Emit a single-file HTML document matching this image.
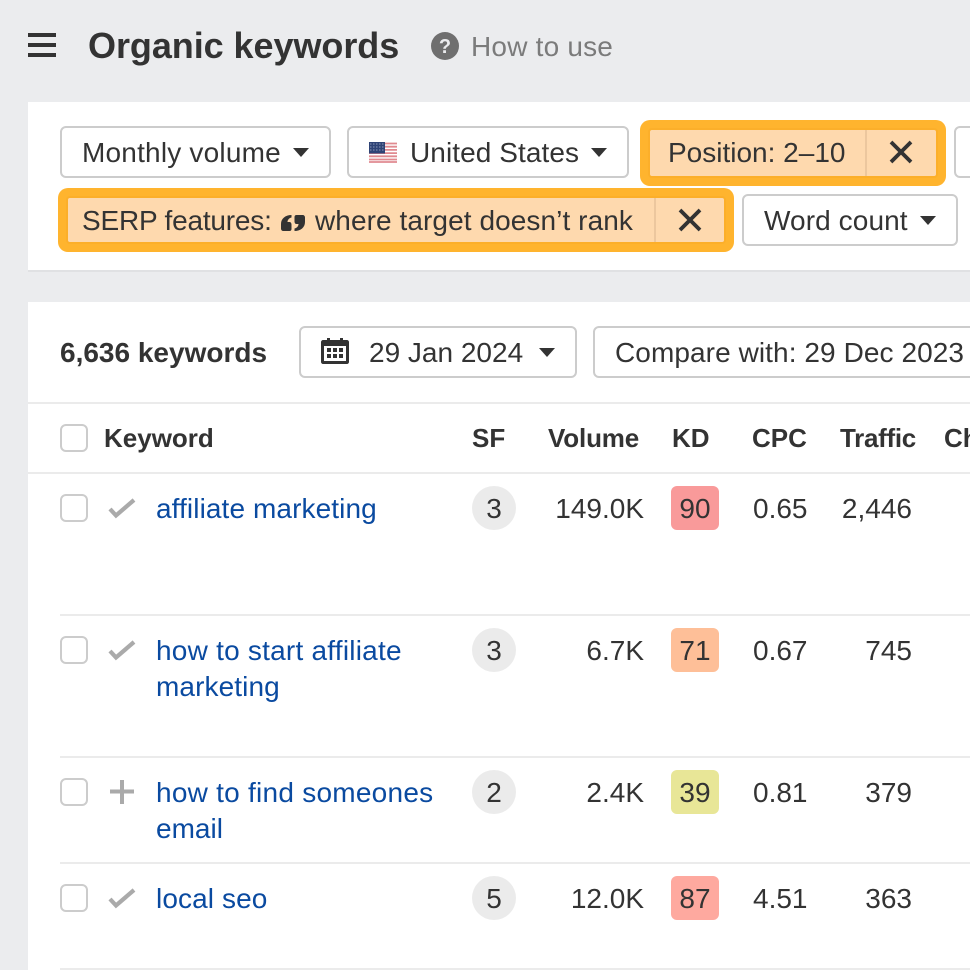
<!DOCTYPE html>
<html><head><meta charset="utf-8"><style>
html,body{margin:0;padding:0;width:970px;height:970px;overflow:hidden;background:#ebecee}
body{position:relative;font-family:"Liberation Sans",sans-serif;color:#333;font-size:28px}
.a,.t,.b,.l{position:absolute}
.t{white-space:nowrap;line-height:36px;height:36px;margin-top:1px}
.b{box-sizing:border-box;border:2px solid #ccc;border-radius:6px;background:#fff}
.l{height:2px;background:#ebebeb}
.o{position:absolute;box-sizing:border-box;background:#ffb42e;border-radius:10px}
.i{position:absolute;background:#fed9ae;box-shadow:0 0 0 2px #fcaf2a;border-radius:2px}
.tri{position:absolute;width:0;height:0;border-left:8px solid transparent;border-right:8px solid transparent;border-top:9px solid #333}
.t.h{font-weight:bold;font-size:26px;margin-top:0}
.cb{position:absolute;box-sizing:border-box;width:28px;height:28px;border:2px solid #ccc;border-radius:6px;background:#fff;left:60px}
.k{color:#0a4aa0}
.sf{position:absolute;left:472px;width:44px;height:44px;border-radius:22px;background:#ebebeb;text-align:center;line-height:45px}
.kd{position:absolute;left:671px;width:48px;height:44px;border-radius:6px;text-align:center;line-height:45px}
.r{text-align:right}
svg{position:absolute;overflow:visible}
</style></head><body>
<svg style="left:28px;top:33px" width="28" height="24"><path d="M0 0H28V4H0ZM0 10H28V14H0ZM0 20H28V24H0Z" fill="#333"/></svg>
<div class="t" style="left:88px;top:25px;margin-top:0;font-size:36px;line-height:42px;height:42px;font-weight:bold;letter-spacing:-.06px">Organic keywords</div>
<svg style="left:431px;top:32px" width="28" height="28" viewBox="0 0 28 28"><circle cx="14" cy="14" r="14" fill="#6f6f6f"/><text x="14" y="21" text-anchor="middle" font-family="Liberation Sans" font-weight="bold" font-size="20" fill="#ebecee">?</text></svg>
<div class="t" style="left:471px;top:28px;color:#7b7b7b;letter-spacing:.2px">How to use</div>

<div class="a" style="left:28px;top:102px;width:942px;height:168px;background:#fff;border-bottom:2px solid #e0e1e3"></div>
<div class="b" style="left:60px;top:126px;width:271px;height:52px"></div>
<div class="t" style="left:82px;top:134px;letter-spacing:.2px">Monthly volume</div>
<div class="tri" style="left:293px;top:148px"></div>
<div class="b" style="left:347px;top:126px;width:282px;height:52px"></div>
<svg style="left:369px;top:142px" width="28" height="21" viewBox="0 0 28 21"><rect width="28" height="21" fill="#fff"/><path d="M0 1.500H28M0 4.700H28M0 7.900H28M0 11.100H28M0 14.300H28M0 17.500H28M0 20H28" stroke="#e08a90" stroke-width="1.800"/><rect width="16" height="11.500" fill="#2f4476"/><path d="M1 2H15M1 5H15M1 8H15" stroke="#8d99b8" stroke-width="1" stroke-dasharray="1.500 1.500"/></svg>
<div class="t" style="left:410px;top:134px;letter-spacing:.08px">United States</div>
<div class="tri" style="left:591px;top:148px"></div>

<div class="o" style="left:640px;top:120px;width:306px;height:66px"></div>
<div class="i" style="left:650px;top:130px;width:286px;height:46px"></div>
<div class="a" style="left:865px;top:130px;width:2px;height:46px;background:#ecc79e"></div>
<div class="t" style="left:668px;top:134px">Position: 2–10</div>
<svg style="left:889px;top:140px" width="24" height="24"><path d="M2 2L22 22M22 2L2 22" stroke="#333" stroke-width="3.800" fill="none"/></svg>
<div class="b" style="left:954px;top:126px;width:60px;height:52px"></div>

<div class="o" style="left:58px;top:188px;width:676px;height:64px"></div>
<div class="i" style="left:68px;top:198px;width:656px;height:44px"></div>
<div class="a" style="left:654px;top:198px;width:2px;height:44px;background:#ecc79e"></div>
<div class="t" style="left:82px;top:202px;letter-spacing:-.2px">SERP features:</div>
<svg style="left:281px;top:215px" width="24" height="16" viewBox="0 0 24 16"><path d="M10.500 0V2.500C8 3 6.500 5 6.500 7H8.500C9.700 7 10.500 8 10.500 9.500V14C10.500 15.200 9.700 16 8.500 16H2.500C1 16 0 15 0 13.500V9C0 3.500 4.500 0 10.500 0Z" fill="#333"/><path transform="rotate(180 12 8)" d="M10.500 0V2.500C8 3 6.500 5 6.500 7H8.500C9.700 7 10.500 8 10.500 9.500V14C10.500 15.200 9.700 16 8.500 16H2.500C1 16 0 15 0 13.500V9C0 3.500 4.500 0 10.500 0Z" fill="#333"/></svg>
<div class="t" style="left:315px;top:202px;letter-spacing:.08px">where target doesn’t rank</div>
<svg style="left:678px;top:208px" width="24" height="24"><path d="M2 2L22 22M22 2L2 22" stroke="#333" stroke-width="3.800" fill="none"/></svg>
<div class="b" style="left:742px;top:194px;width:216px;height:52px"></div>
<div class="t" style="left:764px;top:202px;letter-spacing:.1px">Word count</div>
<div class="tri" style="left:920px;top:216px"></div>

<div class="a" style="left:28px;top:302px;width:942px;height:668px;background:#fff"></div>
<div class="t" style="left:60px;top:335px;margin-top:0;font-weight:bold;font-size:28px">6,636 keywords</div>
<div class="b" style="left:299px;top:326px;width:278px;height:52px"></div>
<svg style="left:321px;top:338px" width="28" height="26" viewBox="0 0 28 26"><path d="M2 2H6V0H9V2H19V0H22V2H26C27 2 28 3 28 4V24C28 25 27 26 26 26H2C1 26 0 25 0 24V4C0 3 1 2 2 2Z" fill="#333"/><rect x="3" y="8" width="22" height="15" fill="#fff"/><path d="M6 10h4v4H6zM12 10h4v4h-4zM18 10h4v4h-4zM6 16h4v4H6zM12 16h4v4h-4zM18 16h4v4h-4z" fill="#333"/></svg>
<div class="t" style="left:369px;top:334px">29 Jan 2024</div>
<div class="tri" style="left:539px;top:348px"></div>
<div class="b" style="left:593px;top:326px;width:420px;height:52px"></div>
<div class="t" style="left:615px;top:334px;letter-spacing:.08px">Compare with: 29 Dec 2023</div>

<div class="l" style="left:28px;top:402px;width:942px"></div>
<div class="l" style="left:28px;top:472px;width:942px"></div>
<div class="cb" style="top:424px"></div>
<div class="t h" style="left:104px;top:420px">Keyword</div>
<div class="t h" style="left:472px;top:420px">SF</div>
<div class="t h" style="left:548px;top:420px;letter-spacing:-.15px">Volume</div>
<div class="t h" style="left:672px;top:420px">KD</div>
<div class="t h" style="left:752px;top:420px">CPC</div>
<div class="t h" style="left:840px;top:420px;letter-spacing:-.3px">Traffic</div>
<div class="t h" style="left:944px;top:420px">Ch</div>

<div class="cb" style="top:494px"></div>
<svg style="left:108px;top:498px" width="28" height="22"><path d="M2 11L8 17.500L26 2" stroke="#aaa" stroke-width="4.200" fill="none"/></svg>
<div class="t k" style="left:156px;top:490px;letter-spacing:.1px">affiliate marketing</div>
<div class="sf" style="top:486px">3</div>
<div class="t r" style="right:326px;top:490px">149.0K</div>
<div class="kd" style="top:486px;background:#f99a9a">90</div>
<div class="t" style="left:753px;top:490px">0.65</div>
<div class="t r" style="right:58px;top:490px">2,446</div>
<div class="l" style="left:60px;top:614px;width:910px"></div>

<div class="cb" style="top:636px"></div>
<svg style="left:108px;top:640px" width="28" height="22"><path d="M2 11L8 17.500L26 2" stroke="#aaa" stroke-width="4.200" fill="none"/></svg>
<div class="t k" style="left:156px;top:632px;letter-spacing:.23px">how to start affiliate</div>
<div class="t k" style="left:156px;top:668px;letter-spacing:.1px">marketing</div>
<div class="sf" style="top:628px">3</div>
<div class="t r" style="right:326px;top:632px">6.7K</div>
<div class="kd" style="top:628px;background:#febf98">71</div>
<div class="t" style="left:753px;top:632px">0.67</div>
<div class="t r" style="right:58px;top:632px">745</div>
<div class="l" style="left:60px;top:756px;width:910px"></div>

<div class="cb" style="top:778px"></div>
<svg style="left:110px;top:780px" width="24" height="24"><path d="M12 0V24M0 11.500H24" stroke="#aaa" stroke-width="4" fill="none"/></svg>
<div class="t k" style="left:156px;top:774px;letter-spacing:.25px">how to find someones</div>
<div class="t k" style="left:156px;top:810px">email</div>
<div class="sf" style="top:770px">2</div>
<div class="t r" style="right:326px;top:774px">2.4K</div>
<div class="kd" style="top:770px;background:#e8e697">39</div>
<div class="t" style="left:753px;top:774px">0.81</div>
<div class="t r" style="right:58px;top:774px">379</div>
<div class="l" style="left:60px;top:862px;width:910px"></div>

<div class="cb" style="top:884px"></div>
<svg style="left:108px;top:888px" width="28" height="22"><path d="M2 11L8 17.500L26 2" stroke="#aaa" stroke-width="4.200" fill="none"/></svg>
<div class="t k" style="left:156px;top:880px;letter-spacing:.1px">local seo</div>
<div class="sf" style="top:876px">5</div>
<div class="t r" style="right:326px;top:880px">12.0K</div>
<div class="kd" style="top:876px;background:#fea99f">87</div>
<div class="t" style="left:753px;top:880px">4.51</div>
<div class="t r" style="right:58px;top:880px">363</div>
<div class="l" style="left:60px;top:968px;width:910px"></div>
</body></html>
